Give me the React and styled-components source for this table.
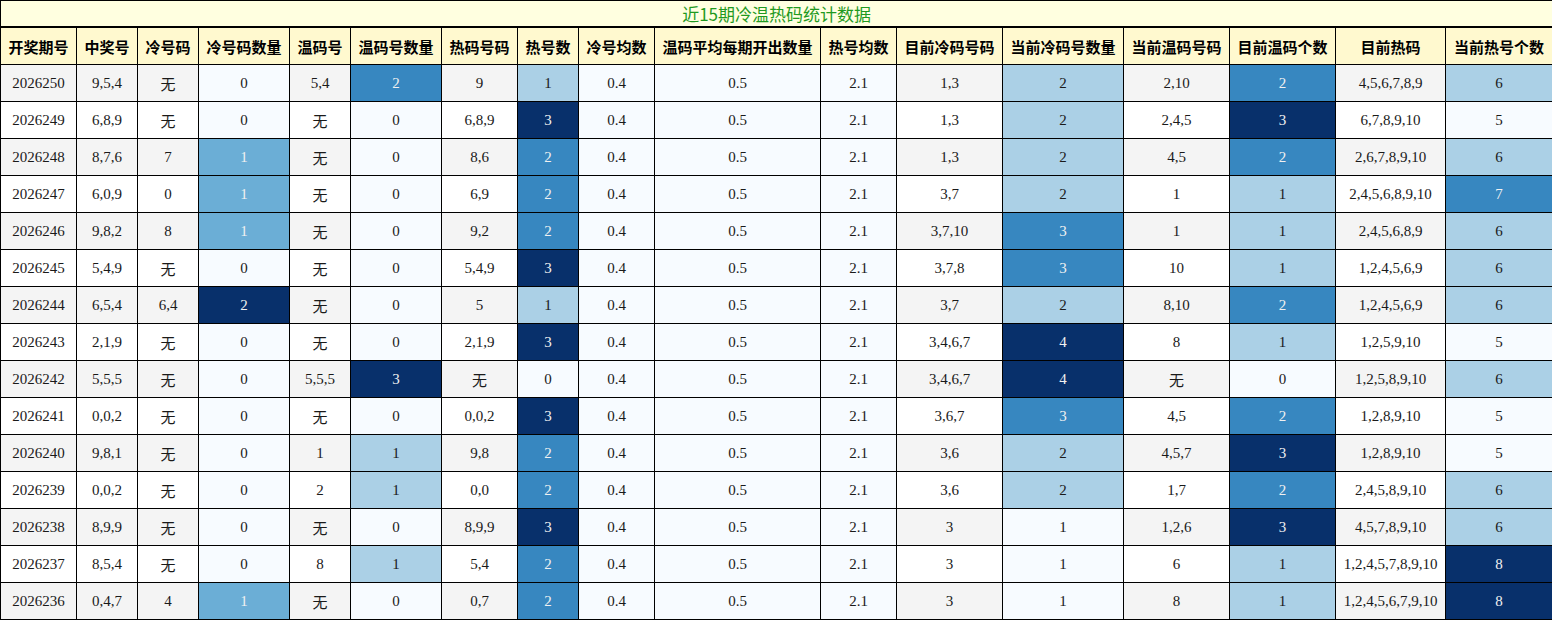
import React from "react";
import styled, { createGlobalStyle } from "styled-components";

const GlobalStyle = createGlobalStyle`
  html, body { margin: 0; padding: 0; background: #ffffff; }
  body { font-family: "Liberation Serif", "Noto Sans CJK SC", serif; }
`;

const columns = [
  { title: "开奖期号", width: 76 },
  { title: "中奖号", width: 61 },
  { title: "冷号码", width: 61 },
  { title: "冷号码数量", width: 91, heat: true },
  { title: "温码号", width: 61 },
  { title: "温码号数量", width: 91, heat: true },
  { title: "热码号码", width: 76 },
  { title: "热号数", width: 61, heat: true },
  { title: "冷号均数", width: 76, flat: true },
  { title: "温码平均每期开出数量", width: 166, flat: true },
  { title: "热号均数", width: 76, flat: true },
  { title: "目前冷码号码", width: 106 },
  { title: "当前冷码号数量", width: 121, heat: true },
  { title: "当前温码号码", width: 106 },
  { title: "目前温码个数", width: 106, heat: true },
  { title: "目前热码", width: 110 },
  { title: "当前热号个数", width: 107, heat: true },
];

const raw = `2026250|9,5,4|无|0|5,4|2|9|1|0.4|0.5|2.1|1,3|2|2,10|2|4,5,6,7,8,9|6
2026249|6,8,9|无|0|无|0|6,8,9|3|0.4|0.5|2.1|1,3|2|2,4,5|3|6,7,8,9,10|5
2026248|8,7,6|7|1|无|0|8,6|2|0.4|0.5|2.1|1,3|2|4,5|2|2,6,7,8,9,10|6
2026247|6,0,9|0|1|无|0|6,9|2|0.4|0.5|2.1|3,7|2|1|1|2,4,5,6,8,9,10|7
2026246|9,8,2|8|1|无|0|9,2|2|0.4|0.5|2.1|3,7,10|3|1|1|2,4,5,6,8,9|6
2026245|5,4,9|无|0|无|0|5,4,9|3|0.4|0.5|2.1|3,7,8|3|10|1|1,2,4,5,6,9|6
2026244|6,5,4|6,4|2|无|0|5|1|0.4|0.5|2.1|3,7|2|8,10|2|1,2,4,5,6,9|6
2026243|2,1,9|无|0|无|0|2,1,9|3|0.4|0.5|2.1|3,4,6,7|4|8|1|1,2,5,9,10|5
2026242|5,5,5|无|0|5,5,5|3|无|0|0.4|0.5|2.1|3,4,6,7|4|无|0|1,2,5,8,9,10|6
2026241|0,0,2|无|0|无|0|0,0,2|3|0.4|0.5|2.1|3,6,7|3|4,5|2|1,2,8,9,10|5
2026240|9,8,1|无|0|1|1|9,8|2|0.4|0.5|2.1|3,6|2|4,5,7|3|1,2,8,9,10|5
2026239|0,0,2|无|0|2|1|0,0|2|0.4|0.5|2.1|3,6|2|1,7|2|2,4,5,8,9,10|6
2026238|8,9,9|无|0|无|0|8,9,9|3|0.4|0.5|2.1|3|1|1,2,6|3|4,5,7,8,9,10|6
2026237|8,5,4|无|0|8|1|5,4|2|0.4|0.5|2.1|3|1|6|1|1,2,4,5,7,8,9,10|8
2026236|0,4,7|4|1|无|0|0,7|2|0.4|0.5|2.1|3|1|8|1|1,2,4,5,6,7,9,10|8`;

const rows = raw.split("\n").map((l) => l.split("|"));

const blues = [
  [247, 251, 255],
  [222, 235, 247],
  [198, 219, 239],
  [158, 202, 225],
  [107, 174, 214],
  [66, 146, 198],
  [33, 113, 181],
  [8, 81, 156],
  [8, 48, 107],
];

function bluesAt(t) {
  const x = Math.max(0, Math.min(1, t)) * (blues.length - 1);
  const i = Math.min(Math.floor(x), blues.length - 2);
  const f = x - i;
  const a = blues[i];
  const b = blues[i + 1];
  const c = a.map((v, k) => Math.round(v + (b[k] - v) * f));
  return c;
}

function luminance([r, g, b]) {
  const lin = (v) => {
    const s = v / 255;
    return s <= 0.03928 ? s / 12.92 : Math.pow((s + 0.055) / 1.055, 2.4);
  };
  return 0.2126 * lin(r) + 0.7152 * lin(g) + 0.0722 * lin(b);
}

const ranges = columns.map((c, ci) => {
  if (!c.heat) return null;
  const vals = rows.map((r) => Number(r[ci]));
  return [Math.min(...vals), Math.max(...vals)];
});

function heatFor(ci, value) {
  const [mn, mx] = ranges[ci];
  const t = mx === mn ? 0 : (Number(value) - mn) / (mx - mn);
  const c = bluesAt(t);
  return {
    bg: `rgb(${c[0]}, ${c[1]}, ${c[2]})`,
    fg: luminance(c) < 0.408 ? "#f1f1f1" : "#1a1a1a",
  };
}

const Table = styled.table`
  width: 1552px;
  border-collapse: collapse;
  table-layout: fixed;
  font-family: "Liberation Serif", "Noto Sans CJK SC", serif;
`;

const TitleCell = styled.th`
  height: 25px;
  padding: 0;
  background: #ffffe0;
  color: #1f9a1f;
  font-family: "Noto Sans CJK SC", sans-serif;
  font-weight: 400;
  font-size: 17px;
  line-height: 25px;
  text-align: center;
  border: 1px solid #000;
  border-bottom: 2px solid #000;
`;

const HeadCell = styled.th`
  height: 36px;
  padding: 0;
  background: #fff9cf;
  color: #000;
  font-family: "Noto Sans CJK SC", sans-serif;
  font-weight: 700;
  font-size: 15px;
  text-align: center;
  white-space: nowrap;
  border: 1px solid #000;
`;

const Row = styled.tr`
  background: ${(p) => (p.$striped ? "#f4f4f4" : "#ffffff")};
`;

const Cell = styled.td`
  height: 36px;
  padding: 0;
  text-align: center;
  white-space: nowrap;
  font-size: 15px;
  color: ${(p) => p.$fg || "#1a1a1a"};
  background: ${(p) => p.$bg || "transparent"};
  border: 1px solid #000;
`;

export default function App() {
  return (
    <>
      <GlobalStyle />
      <Table>
        <colgroup>
          {columns.map((c) => (
            <col key={c.title} style={{ width: c.width }} />
          ))}
        </colgroup>
        <thead>
          <tr>
            <TitleCell colSpan={columns.length}>近15期冷温热码统计数据</TitleCell>
          </tr>
          <tr>
            {columns.map((c) => (
              <HeadCell key={c.title}>{c.title}</HeadCell>
            ))}
          </tr>
        </thead>
        <tbody>
          {rows.map((r, ri) => (
            <Row key={r[0]} $striped={ri % 2 === 0}>
              {r.map((v, ci) => {
                const col = columns[ci];
                if (col.heat) {
                  const h = heatFor(ci, v);
                  return (
                    <Cell key={ci} $bg={h.bg} $fg={h.fg}>
                      {v}
                    </Cell>
                  );
                }
                if (col.flat) {
                  return (
                    <Cell key={ci} $bg="#f7fbff">
                      {v}
                    </Cell>
                  );
                }
                return <Cell key={ci}>{v}</Cell>;
              })}
            </Row>
          ))}
        </tbody>
      </Table>
    </>
  );
}
